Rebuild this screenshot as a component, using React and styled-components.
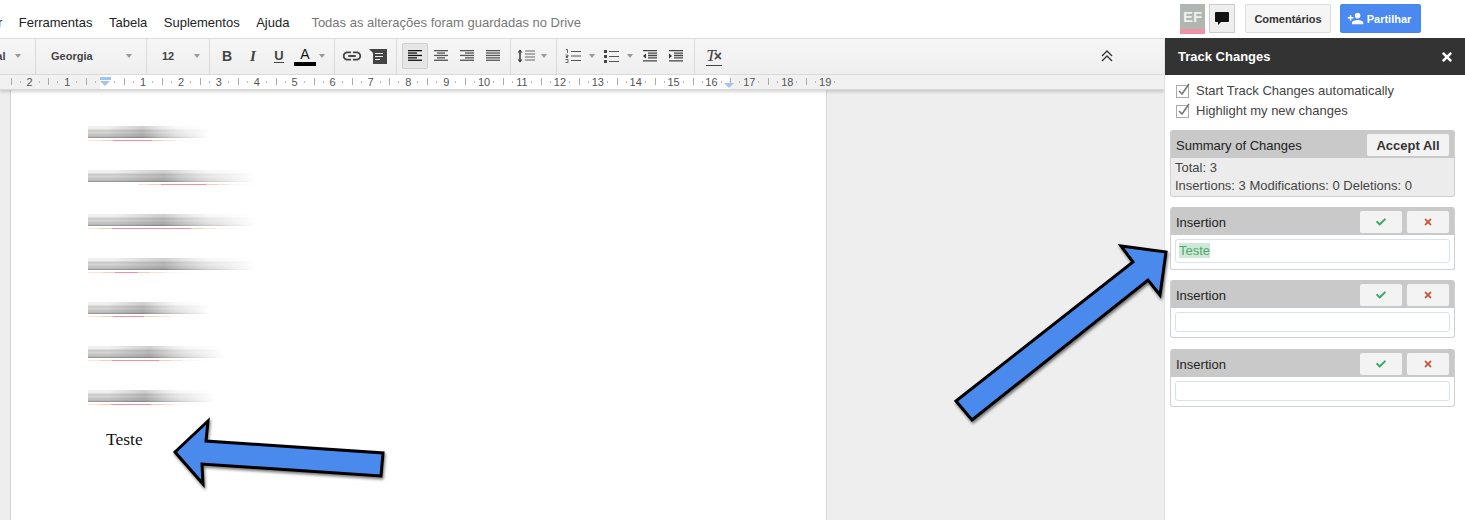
import React from 'react';
import styled, { createGlobalStyle } from 'styled-components';
import { MdPersonAdd, MdLink } from 'react-icons/md';
import { FaCheck, FaTimes } from 'react-icons/fa';

const GlobalStyle = createGlobalStyle`
    html, body {
        margin: 0;
        padding: 0;
        background: #fff;
    }
    body {
        font-family: "Liberation Sans", Arial, sans-serif;
        color: #222;
    }
`;

const Screen = styled.div`
    position: relative;
    width: 1465px;
    height: 520px;
    overflow: hidden;
    background: #fff;
`;

const TopBar = styled.header`
    display: flex;
    align-items: flex-start;
    height: 38px;
    box-sizing: border-box;
    padding-right: 44px;
`;

const Menu = styled.nav`
    display: flex;
    gap: 16.5px;
    margin-left: -50.5px;
    padding-top: 15px;
    font-size: 13px;
    line-height: 15px;
    color: #222;
`;

const SaveStatus = styled.span`
    margin-left: 22px;
    padding-top: 15px;
    font-size: 13px;
    line-height: 15px;
    color: #777;
`;

const Account = styled.div`
    display: flex;
    align-items: flex-start;
    margin-left: auto;
    padding-top: 4px;
`;

const Avatar = styled.div`
    width: 25px;
    height: 30px;
    box-sizing: border-box;
    background: #b1b6b1;
    border-bottom: 5px solid #f092a5;
    color: #eef0ee;
    font-size: 15px;
    font-weight: bold;
    line-height: 25px;
    text-align: center;
`;

const ChatButton = styled.div`
    display: flex;
    align-items: center;
    justify-content: center;
    width: 26px;
    height: 29px;
    box-sizing: border-box;
    margin: 0 10px 0 4px;
    background: #eee;
    border: 1px solid #ccc;
`;

const TopButton = styled.div`
    display: flex;
    align-items: center;
    justify-content: center;
    gap: 3px;
    width: ${(p) => p.$w}px;
    height: 29px;
    box-sizing: border-box;
    margin-right: ${(p) => p.$mr || 0}px;
    padding-right: ${(p) => (p.$primary ? 3 : 0)}px;
    border-radius: 2px;
    border: 1px solid ${(p) => (p.$primary ? '#4a86e8' : '#ddd')};
    background: ${(p) => (p.$primary ? '#4a8af0' : '#f5f5f5')};
    color: ${(p) => (p.$primary ? '#fff' : '#333')};
    font-size: 11px;
    font-weight: bold;
`;

const Main = styled.div`
    display: flex;
    height: 482px;
`;

const Workspace = styled.div`
    display: flex;
    flex-direction: column;
    width: 1165px;
    min-width: 0;
`;

const Toolbar = styled.div`
    display: flex;
    align-items: stretch;
    height: 37px;
    box-sizing: border-box;
    overflow: hidden;
    border-top: 1px solid #dcdcdc;
    border-bottom: 1px solid #dcdcdc;
    background: linear-gradient(to bottom, #f6f6f6, #efefef);
`;

const Group = styled.div`
    display: flex;
    align-items: center;
    flex: ${(p) => (p.$w ? `0 0 ${p.$w}px` : '1 1 auto')};
    box-sizing: border-box;
    padding-left: ${(p) => p.$pl || 0}px;
    padding-right: ${(p) => p.$pr || 0}px;
    padding-bottom: 1px;
    border-right: ${(p) => (p.$w ? '1px solid #dadada' : 'none')};
`;

const Select = styled.div`
    display: flex;
    align-items: center;
    justify-content: space-between;
    width: ${(p) => p.$w}px;
    margin-left: ${(p) => p.$ml || 0}px;
    font-size: 11px;
    font-weight: bold;
    color: #444;
    flex-shrink: 0;
`;

const Caret = styled.span`
    width: 0;
    height: 0;
    flex-shrink: 0;
    margin: 0 ${(p) => p.$mr || 0}px 0 ${(p) => p.$ml || 0}px;
    border-left: 3px solid transparent;
    border-right: 3px solid transparent;
    border-top: 4px solid #999;
`;

const ToolButton = styled.div`
    display: flex;
    align-items: center;
    justify-content: center;
    flex-shrink: 0;
    width: ${(p) => p.$w || 26}px;
    height: 26px;
    box-sizing: border-box;
    border-radius: 2px;
    border: 1px solid ${(p) => (p.$active ? '#cfcfcf' : 'transparent')};
    background: ${(p) => (p.$active ? '#e6e6e6' : 'transparent')};
    color: #444;
`;

const CollapseButton = styled(ToolButton)`
    margin-left: auto;
`;

const Bold = styled.span`
    font-size: 14px;
    font-weight: bold;
`;

const Italic = styled.span`
    font-family: "Liberation Serif", serif;
    font-size: 15px;
    font-weight: bold;
    font-style: italic;
`;

const Underlined = styled.span`
    font-size: 13px;
    font-weight: bold;
    border-bottom: 1px solid #444;
    line-height: 12px;
`;

const TextColor = styled.span`
    display: block;
    width: 22px;
    box-sizing: border-box;
    border-bottom: 4px solid #000;
    color: #111;
    font-size: 14px;
    line-height: 16px;
    text-align: center;
`;

const ClearFormat = styled.span`
    color: #444;
    font-family: "Liberation Serif", serif;
    font-size: 17px;
    font-style: italic;
    line-height: 17px;
    border-bottom: 1px solid #444;

    & b {
        font-family: "Liberation Sans", sans-serif;
        font-size: 14px;
        font-style: normal;
        margin-left: -2px;
    }
`;

const Ruler = styled.div`
    display: flex;
    height: 14px;
    flex-shrink: 0;
    padding-left: 10.5px;
    background: linear-gradient(to right, #f1f1f1 0 100px, #fff 100px 729px, #f1f1f1 729px);
    border-bottom: 1px solid #d8d8d8;
    position: relative;
    z-index: 1;
    box-shadow: 0 2px 3px rgba(0, 0, 0, 0.16);
`;

const RulerCell = styled.span`
    flex: 0 0 37.9px;
    height: 14px;
    color: #555;
    font-size: 11px;
    line-height: 14px;
    text-align: center;
    background:
        linear-gradient(#aaa, #aaa) left 3px / 1px 7px no-repeat,
        linear-gradient(#bbb, #bbb) 9px 6px / 1px 2px no-repeat,
        linear-gradient(#bbb, #bbb) 28px 6px / 1px 2px no-repeat;
`;

const IndentMark = styled.span`
    position: absolute;
    left: ${(p) => p.$x}px;
    top: ${(p) => p.$y}px;
    width: 0;
    height: 0;
    border-left: 5.5px solid transparent;
    border-right: 5.5px solid transparent;
    border-top: 5px solid #9fc5f0;
`;

const IndentBar = styled.span`
    position: absolute;
    left: 100px;
    top: 2px;
    width: 11px;
    height: 3px;
    background: #9fc5f0;
`;

const Editor = styled.main`
    flex: 1;
    min-height: 0;
    padding-left: 10px;
    background: #eeeeee;
`;

const Sheet = styled.section`
    width: 817px;
    height: 100%;
    box-sizing: border-box;
    padding: 36px 0 0 77px;
    background: #fff;
    border-left: 1px solid #d0d0d0;
    border-right: 1px solid #d8d8d8;
`;

const Redacted = styled.div`
    height: 44px;
`;

const Smudge = styled.div`
    width: ${(p) => p.$w}px;
    height: 12px;
    background:
        linear-gradient(to right, transparent 15%, rgba(70, 70, 70, 0.2) 45%, transparent 72%),
        linear-gradient(to bottom, #f0f0f0 0 3px, #c8cac8 4px, #d4d5d4 7px, #bcbebc 9px, #c8c9c8 10px, #888 12px);
    -webkit-mask-image: linear-gradient(to right, #000 45%, transparent);
    mask-image: linear-gradient(to right, #000 45%, transparent);
`;

const underlineGradient = ({ start, from, to, end }) => {
    const a = from - start;
    const b = to - start;
    const c = end - start;
    return `linear-gradient(to right, #fbe3d6 0 ${a - 12}px, #fbcdb4 ${a - 12}px ${a}px, #f98ca3 ${a}px ${b}px, #fbcdb4 ${b}px ${b + 12}px, #fbe3d6 ${b + 12}px ${c}px, #f5f5f5 ${c}px, #fff)`;
};

const Underline = styled.div`
    width: ${(p) => p.$line.end + 30 - p.$line.start}px;
    height: 1px;
    margin: 2px 0 0 ${(p) => p.$line.start}px;
    background: ${(p) => underlineGradient(p.$line)};
`;

const Paragraph = styled.p`
    margin: -5px 0 0 18px;
    font-family: "Liberation Serif", serif;
    font-size: 17.5px;
    line-height: 20px;
    color: #111;
`;

const Sidebar = styled.aside`
    flex: 0 0 301px;
    box-sizing: border-box;
    border-left: 1px solid #e2e2e2;
    background: #fff;
    margin-left: -1px;
    position: relative;
    z-index: 1;
`;

const SidebarHeader = styled.div`
    display: flex;
    align-items: center;
    justify-content: space-between;
    height: 37px;
    box-sizing: border-box;
    padding: 0 11px 0 13px;
    background: #333;
    color: #fff;
    font-size: 13px;
    font-weight: bold;
`;

const Options = styled.div`
    display: flex;
    flex-direction: column;
    gap: 2px;
    padding: 6px 0 0 11px;
`;

const Option = styled.label`
    display: flex;
    align-items: center;
    gap: 5px;
    height: 18px;
    font-size: 13px;
    color: #444;
`;

const Cards = styled.div`
    display: flex;
    flex-direction: column;
    gap: 10px;
    margin: 11px 10px 0 5px;
`;

const Card = styled.div`
    margin-top: ${(p) => p.$mt || 0}px;
    border: 1px solid #d0d0d0;
    border-top: none;
    border-radius: 3px;
    overflow: hidden;
    background: ${(p) => (p.$summary ? '#ececec' : '#fff')};
`;

const CardHeader = styled.div`
    display: flex;
    align-items: center;
    gap: 5px;
    height: 28px;
    box-sizing: border-box;
    padding: 0 5px;
    background: #c9c9c9;
    color: #222;
    font-size: 13px;
`;

const CardTitle = styled.span`
    margin-right: auto;
    padding-top: 2px;
`;

const CardButton = styled.div`
    display: flex;
    align-items: center;
    justify-content: center;
    width: ${(p) => p.$w || 42}px;
    height: 22px;
    margin-top: 2px;
    border-radius: 2px;
    background: #f3f3f3;
    color: ${(p) => p.$color || '#333'};
    font-size: 13px;
    font-weight: bold;
`;

const SummaryBody = styled.div`
    padding: 1px 0 2px 4px;
    font-size: 13px;
    line-height: 17.5px;
    color: #444;
`;

const ChangeBody = styled.div`
    padding: 4px 4px ${(p) => (p.$filled ? 6 : 5)}px 4px;
`;

const ChangeText = styled.div`
    box-sizing: border-box;
    height: ${(p) => (p.$filled ? 24 : 20)}px;
    padding: 3px 0 0 3px;
    border: 1px solid #d8e2ea;
    border-radius: 3px;
    font-size: 13px;
    line-height: 15px;
`;

const Inserted = styled.span`
    display: inline-block;
    background: #cfe9d6;
    color: #4fa873;
`;

const ArrowLayer = styled.svg`
    position: absolute;
    inset: 0;
    z-index: 2;
    pointer-events: none;
`;

const Arrow = styled.polygon`
    fill: #4a8aec;
    stroke: #000;
    stroke-width: 3;
    stroke-linejoin: miter;
    filter: drop-shadow(1px 2px 1.5px rgba(0, 0, 0, 0.55));
`;

const rulerLabels = [2, 1, '', ...Array.from({ length: 19 }, (_, i) => i + 1)];

// x1 / x2 of every line in the paragraph icons
const alignments = {
    left: [[0, 14], [0, 9], [0, 14], [0, 9], [0, 14]],
    center: [[0, 14], [3, 11], [0, 14], [3, 11], [0, 14]],
    right: [[0, 14], [5, 14], [0, 14], [5, 14], [0, 14]],
    justify: [[0, 14], [0, 14], [0, 14], [0, 14], [0, 14]]
};

const AlignIcon = ({ kind, dark }) => (
    <svg width="14" height="12" viewBox="0 0 14 12">
        {alignments[kind].map(([from, to], i) => (
            <rect key={i} x={from} y={i * 2.4} width={to - from} height="1.3" fill={dark ? '#111' : '#555'} />
        ))}
    </svg>
);

const IndentIcon = ({ increase }) => (
    <svg width="14" height="12" viewBox="0 0 14 12">
        <path d="M0 0.700h14M5 3.100h9M5 5.500h9M5 7.900h9M0 10.800h14" stroke="#444" strokeWidth="1.300" />
        <path d={increase ? 'M0 3.500l3 2.500-3 2.500z' : 'M3 3.500l-3 2.500 3 2.500z'} fill="#333" />
    </svg>
);

const CommentAddIcon = () => (
    <svg width="18" height="15" viewBox="0 0 18 15">
        <path d="M0 0h18v15H4V4z" fill="#444" />
        <path d="M6 4.500h8M6 7.500h8M6 10.500h5" stroke="#eee" strokeWidth="1.200" />
    </svg>
);

const LineSpacingIcon = () => (
    <svg width="20" height="14" viewBox="0 0 20 14">
        <path d="M3 1v12" stroke="#444" strokeWidth="1.600" />
        <path d="M0.500 3.500L3 0.500l2.500 3zM0.500 10.500L3 13.500l2.500-3z" fill="#444" />
        <path d="M8 2h10M8 5h10M8 8h10M8 11h10" stroke="#666" strokeWidth="1.200" />
    </svg>
);

const NumberedIcon = () => (
    <svg width="16" height="14" viewBox="0 0 16 14">
        <path d="M6 2.500h10M6 7h10M6 11.500h10" stroke="#555" strokeWidth="1.200" />
        <path d="M1 0.500h1.500v3.500M0.500 6h2.500v1.500H1v1h2M0.500 10.500H3v3H0.500" fill="none" stroke="#555" strokeWidth="0.900" />
    </svg>
);

const BulletedIcon = () => (
    <svg width="15" height="13" viewBox="0 0 15 13">
        <rect x="0" y="0" width="3" height="3" fill="#444" />
        <rect x="0" y="5" width="3" height="3" fill="#444" />
        <rect x="0" y="10" width="3" height="3" fill="#444" />
        <path d="M5 1.500h10M5 6.500h10M5 11.500h10" stroke="#555" strokeWidth="1.200" />
    </svg>
);

const CollapseIcon = () => (
    <svg width="12" height="12" viewBox="0 0 12 12">
        <path d="M1 6l5-5 5 5M1 11l5-5 5 5" fill="none" stroke="#333" strokeWidth="1.400" />
    </svg>
);

const ChatIcon = () => (
    <svg width="14" height="13" viewBox="0 0 14 13">
        <path d="M1 0h12a1 1 0 0 1 1 1v8a1 1 0 0 1-1 1H6l-3 3v-3H1a1 1 0 0 1-1-1V1a1 1 0 0 1 1-1z" fill="#111" />
    </svg>
);

const CheckBoxIcon = () => (
    <svg width="15" height="15" viewBox="0 0 15 15">
        <rect x="0.500" y="2.500" width="12" height="12" fill="#fff" stroke="#aaa" />
        <path d="M3 8l3 3 7-10" fill="none" stroke="#777" strokeWidth="1.600" />
    </svg>
);

const lines = [
    { w: 122, start: 0, from: 25, to: 64, end: 88 },
    { w: 168, start: 50, from: 73, to: 118, end: 141 },
    { w: 168, start: 0, from: 24, to: 103, end: 128 },
    { w: 168, start: 0, from: 27, to: 50, end: 76 },
    { w: 123, start: 0, from: 25, to: 56, end: 81 },
    { w: 137, start: 0, from: 24, to: 71, end: 94 },
    { w: 127, start: 0, from: 23, to: 63, end: 86 }
];

const ChangeCard = ({ text, mt }) => (
    <Card $mt={mt}>
        <CardHeader>
            <CardTitle>Insertion</CardTitle>
            <CardButton $color="#3aa866"><FaCheck size={10} /></CardButton>
            <CardButton $color="#c8553a"><FaTimes size={10} /></CardButton>
        </CardHeader>
        <ChangeBody $filled={!!text}>
            <ChangeText $filled={!!text}>{text && <Inserted>{text}</Inserted>}</ChangeText>
        </ChangeBody>
    </Card>
);

const App = () => (
    <Screen>
        <GlobalStyle />
        <TopBar>
            <Menu>
                <span>Formatar</span>
                <span>Ferramentas</span>
                <span>Tabela</span>
                <span>Suplementos</span>
                <span>Ajuda</span>
            </Menu>
            <SaveStatus>Todas as alterações foram guardadas no Drive</SaveStatus>
            <Account>
                <Avatar>EF</Avatar>
                <ChatButton><ChatIcon /></ChatButton>
                <TopButton $w={86} $mr={9}>Comentários</TopButton>
                <TopButton $w={81} $primary><MdPersonAdd size={17} />Partilhar</TopButton>
            </Account>
        </TopBar>
        <Main>
            <Workspace>
                <Toolbar>
                    <Group $w={36}>
                        <Select $w={40} $ml={-19}>Arial<Caret /></Select>
                    </Group>
                    <Group $w={111} $pl={15}>
                        <Select $w={81}>Georgia<Caret /></Select>
                    </Group>
                    <Group $w={63} $pl={15}>
                        <Select $w={38}>12<Caret /></Select>
                    </Group>
                    <Group $w={125} $pl={4}>
                        <ToolButton><Bold>B</Bold></ToolButton>
                        <ToolButton><Italic>I</Italic></ToolButton>
                        <ToolButton><Underlined>U</Underlined></ToolButton>
                        <ToolButton><TextColor>A</TextColor></ToolButton>
                        <Caret $ml={1} />
                    </Group>
                    <Group $w={62} $pl={4}>
                        <ToolButton><MdLink size={22} /></ToolButton>
                        <ToolButton><CommentAddIcon /></ToolButton>
                    </Group>
                    <Group $w={114} $pl={5}>
                        <ToolButton $active><AlignIcon kind="left" dark /></ToolButton>
                        <ToolButton><AlignIcon kind="center" /></ToolButton>
                        <ToolButton><AlignIcon kind="right" /></ToolButton>
                        <ToolButton><AlignIcon kind="justify" /></ToolButton>
                    </Group>
                    <Group $w={46} $pl={5}>
                        <ToolButton $w={22}><LineSpacingIcon /></ToolButton>
                        <Caret $ml={3} />
                    </Group>
                    <Group $w={138} $pl={3}>
                        <ToolButton><NumberedIcon /></ToolButton>
                        <Caret $ml={3} $mr={3} />
                        <ToolButton><BulletedIcon /></ToolButton>
                        <Caret $ml={3} $mr={4} />
                        <ToolButton><IndentIcon /></ToolButton>
                        <ToolButton><IndentIcon increase /></ToolButton>
                    </Group>
                    <Group $pl={6} $pr={45}>
                        <ToolButton><ClearFormat>T<b>×</b></ClearFormat></ToolButton>
                        <CollapseButton><CollapseIcon /></CollapseButton>
                    </Group>
                </Toolbar>
                <Ruler>
                    {rulerLabels.map((label, i) => <RulerCell key={i}>{label}</RulerCell>)}
                    <IndentBar />
                    <IndentMark $x={100} $y={6} />
                    <IndentMark $x={723.5} $y={8} />
                </Ruler>
                <Editor>
                    <Sheet>
                        {lines.map((line, i) => (
                            <Redacted key={i}>
                                <Smudge $w={line.w} />
                                <Underline $line={line} />
                            </Redacted>
                        ))}
                        <Paragraph>Teste</Paragraph>
                    </Sheet>
                </Editor>
            </Workspace>
            <Sidebar>
                <SidebarHeader>
                    Track Changes
                    <FaTimes size={14} />
                </SidebarHeader>
                <Options>
                    <Option><CheckBoxIcon />Start Track Changes automatically</Option>
                    <Option><CheckBoxIcon />Highlight my new changes</Option>
                </Options>
                <Cards>
                    <Card $summary>
                        <CardHeader>
                            <CardTitle>Summary of Changes</CardTitle>
                            <CardButton $w={82}>Accept All</CardButton>
                        </CardHeader>
                        <SummaryBody>
                            <div>Total: 3</div>
                            <div>Insertions: 3 Modifications: 0 Deletions: 0</div>
                        </SummaryBody>
                    </Card>
                    <ChangeCard text="Teste" />
                    <ChangeCard />
                    <ChangeCard mt={1} />
                </Cards>
            </Sidebar>
        </Main>
        <ArrowLayer width="1465" height="520" viewBox="0 0 1465 520">
            <Arrow points="175,452 208,421 206,441 383,453 381,476 202,464 203,484" />
            <Arrow points="956,401 972,420 1148,280 1160,295 1166,252 1121,246 1133,262" />
        </ArrowLayer>
    </Screen>
);

export default App;
